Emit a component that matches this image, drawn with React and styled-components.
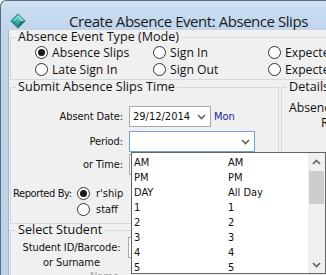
import React from 'react';
import styled, { createGlobalStyle, css } from 'styled-components';

const SEGOE = `"Open Sans", "Noto Sans", sans-serif`;
const TAHOMA = `"DejaVu Sans Condensed", "DejaVu Sans", sans-serif`;

const Global = createGlobalStyle`
  html, body { margin: 0; padding: 0; background: #ffffff; overflow: hidden; }
  body { width: 326px; height: 275px; }
  * { box-sizing: border-box; }
`;

const Window = styled.div`
  width: 345px;
  height: 300px;
  border-top: 1px solid #5d6b7b;
  border-left: 1px solid #5d6b7b;
  border-top-left-radius: 6px;
  background: linear-gradient(180deg, #cde0f3 0px, #c0d5ec 30px, #bcd2ea 100%);
  display: flex;
  flex-direction: column;
`;

const TitleBar = styled.div`
  height: 29px;
  flex: none;
  display: flex;
  align-items: center;
  padding: 10px 0 0 9px;
`;

const Title = styled.div`
  font-family: ${SEGOE};
  font-size: 15px;
  line-height: 18px;
  color: #1b1b1b;
  margin-left: 43px;
  white-space: nowrap;
  letter-spacing: -0.45px;
`;

const Client = styled.div`
  position: relative;
  flex: 1;
  margin-left: 7px;
  border-left: 1px solid #9fb3ca;
  background: #f0f0f0;
  overflow: hidden;
`;

const Group = styled.fieldset`
  margin: ${p => p.$mt || 0}px 0 0 ${p => p.$ml || 1}px;
  padding: 0 0 1px 0;
  border: 1px solid #d5d9dd;
  width: ${p => p.$w}px;
  height: ${p => (p.$h ? `${p.$h}px` : 'auto')};
  min-width: 0;
  flex: none;
`;

const Legend = styled.legend`
  margin-left: 5px;
  padding: 0 2px;
  font-family: ${SEGOE};
  font-size: 12.6px;
  line-height: 14px;
  color: #111;
`;

const RadioGrid = styled.div`
  display: grid;
  grid-template-columns: 118px 115px auto;
  grid-auto-rows: 17px;
  padding-left: 24px;
`;

const RadioItem = styled.label`
  display: flex;
  align-items: center;
  gap: ${p => p.$gap || 4}px;
  font-family: ${p => (p.$tahoma ? TAHOMA : SEGOE)};
  font-size: ${p => (p.$tahoma ? 11 : 12.2)}px;
  color: #111;
  white-space: nowrap;
`;

const RadioCircle = styled.span`
  position: relative;
  flex: none;
  width: 13px;
  height: 13px;
  border-radius: 50%;
  border: 1px solid #333;
  background: #fff;
  ${p =>
    p.$checked &&
    css`
      &::after {
        content: '';
        position: absolute;
        left: 2px;
        top: 2px;
        width: 7px;
        height: 7px;
        border-radius: 50%;
        background: #1a1a1a;
      }
    `}
`;

const Row = styled.div`
  display: flex;
  align-items: flex-start;
`;

const FieldRow = styled.div`
  display: grid;
  grid-template-columns: 113px auto;
  column-gap: ${p => p.$gap ?? 5}px;
  align-items: ${p => p.$align || 'center'};
  height: ${p => p.$h || 21}px;
  margin-top: ${p => p.$mt || 0}px;
`;

const Label = styled.div`
  font-family: ${TAHOMA};
  font-size: 11px;
  line-height: 15px;
  letter-spacing: ${p => p.$ls ?? -0.1}px;
  color: ${p => p.$color || '#111'};
  text-align: ${p => p.$align || 'right'};
  padding-left: ${p => p.$pl || 0}px;
  padding-right: ${p => p.$pr || 0}px;
  margin-top: ${p => p.$mt || 0}px;
  white-space: nowrap;
`;

const InputBox = styled.div`
  height: 21px;
  width: ${p => p.$w}px;
  border: 1px solid ${p => (p.$focus ? '#6ea3d9' : '#a9a9a9')};
  background: #fff;
  display: flex;
  align-items: center;
  padding: 0 4px 0 3px;
  font-family: ${TAHOMA};
  font-size: 11px;
  color: #111;
`;

const InputText = styled.span`
  flex: 1;
`;

const Inline = styled.div`
  display: flex;
  align-items: center;
  gap: 3px;
`;

const DayText = styled.span`
  font-family: ${TAHOMA};
  font-size: 11px;
  color: #1e1ea4;
`;

const ReportGrid = styled.div`
  display: grid;
  grid-template-columns: 66px auto;
  grid-auto-rows: 16px;
  margin-top: ${p => p.$mt || 0}px;
  align-items: center;
`;

const DetailText = styled.div`
  font-family: ${SEGOE};
  font-size: 12.2px;
  line-height: 14px;
  color: #111;
  padding-left: ${p => p.$pl || 0}px;
  margin-top: ${p => p.$mt || 0}px;
  white-space: nowrap;
`;

const DropList = styled.div`
  position: absolute;
  left: 122px;
  top: 122px;
  width: 195px;
  height: 122px;
  border: 1px solid #646464;
  background: #fff;
  display: flex;
  z-index: 5;
`;

const ListBody = styled.div`
  flex: 1;
  padding: 2px 0 0 2px;
`;

const ListRow = styled.div`
  display: grid;
  grid-template-columns: 94px auto;
  height: 15px;
  align-items: center;
  font-family: ${TAHOMA};
  font-size: 11px;
  color: #111;
`;

const ScrollBar = styled.div`
  width: 17px;
  flex: none;
  background: #f0f0f0;
  display: flex;
  flex-direction: column;
  align-items: stretch;
`;

const ScrollBtn = styled.div`
  height: 17px;
  display: flex;
  align-items: center;
  justify-content: center;
`;

const Thumb = styled.div`
  height: 33px;
  margin: 1px 1px 0 1px;
  background: #cdcdcd;
`;

const Spacer = styled.div`
  flex: 1;
`;

const Chevron = ({ up }) => (
  <svg width="9" height="6" viewBox="0 0 9 6">
    <polyline
      points={up ? '1,5 4.5,1.5 8,5' : '1,1 4.5,4.5 8,1'}
      fill="none"
      stroke="#606060"
      strokeWidth="1.6"
    />
  </svg>
);

const AppIcon = () => (
  <svg width="16" height="16" viewBox="0 0 16 16">
    <polygon points="8,0.5 15.5,8 8,15.5 0.5,8" fill="#1f6f6b" />
    <polygon points="8,1.8 14.2,8 8,8 1.8,8" fill="#69d5c9" />
    <polygon points="8,1.8 14.2,8 8,8" fill="#93e6dc" />
    <polygon points="1.8,8 8,8 8,14.2" fill="#2a9a90" />
    <polygon points="8,8 14.2,8 8,14.2" fill="#1c7b74" />
    <polygon points="8,4.5 11.5,8 8,11.5 4.5,8" fill="#3fb3a8" opacity="0.8" />
  </svg>
);

const Radio = ({ checked, children, gap, tahoma }) => (
  <RadioItem $gap={gap} $tahoma={tahoma}>
    <RadioCircle $checked={checked} />
    <span>{children}</span>
  </RadioItem>
);

const periods = [
  ['AM', 'AM'],
  ['PM', 'PM'],
  ['DAY', 'All Day'],
  ['1', '1'],
  ['2', '2'],
  ['3', '3'],
  ['4', '4'],
  ['5', '5'],
];

export default function App() {
  return (
    <>
      <Global />
      <Window>
        <TitleBar>
          <AppIcon />
          <Title>Create Absence Event: Absence Slips</Title>
        </TitleBar>
        <Client>
          <Group $w={345}>
            <Legend>Absence Event Type (Mode)</Legend>
            <RadioGrid>
              <Radio checked>Absence Slips</Radio>
              <Radio>Sign In</Radio>
              <Radio>Expected Absence</Radio>
              <Radio>Late Sign In</Radio>
              <Radio>Sign Out</Radio>
              <Radio>Expected Late</Radio>
            </RadioGrid>
          </Group>
          <Row>
            <Group $w={269} $h={144}>
              <Legend>Submit Absence Slips Time</Legend>
              <FieldRow $mt={12}>
                <Label $pr={1}>Absent Date:</Label>
                <Inline>
                  <InputBox $w={82}>
                    <InputText>29/12/2014</InputText>
                    <Chevron />
                  </InputBox>
                  <DayText>Mon</DayText>
                </Inline>
              </FieldRow>
              <FieldRow $mt={4}>
                <Label $pr={1}>Period:</Label>
                <InputBox $w={126} $focus>
                  <InputText />
                  <Chevron />
                </InputBox>
              </FieldRow>
              <FieldRow $mt={2}>
                <Label $pr={1}>or Time:</Label>
                <InputBox $w={80} />
              </FieldRow>
              <ReportGrid $mt={10}>
                <Label $align="left" $pl={2} $ls={-0.4}>Reported By:</Label>
                <Radio checked gap={6} tahoma>r'ship</Radio>
                <span />
                <Radio gap={6} tahoma>staff</Radio>
              </ReportGrid>
            </Group>
            <Group $w={60} $h={144} $ml={2}>
              <Legend>Details</Legend>
              <DetailText $mt={7} $pl={7}>Absence</DetailText>
              <DetailText $mt={1} $pl={39}>R</DetailText>
            </Group>
          </Row>
          <Group $w={300} $h={70} $mt={-1}>
            <Legend>Select Student</Legend>
            <FieldRow $h={29} $gap={4} $align="start">
              <Label $align="center" $pl={8} $mt={3}>
                Student ID/Barcode:
                <br />
                or Surname
              </Label>
              <InputBox $w={120} />
            </FieldRow>
            <FieldRow>
              <Label $pr={2} $color="#a0a0a0">Name:</Label>
              <span />
            </FieldRow>
          </Group>
          <DropList>
            <ListBody>
              {periods.map(([code, name]) => (
                <ListRow key={code}>
                  <span>{code}</span>
                  <span>{name}</span>
                </ListRow>
              ))}
            </ListBody>
            <ScrollBar>
              <ScrollBtn>
                <Chevron up />
              </ScrollBtn>
              <Thumb />
              <Spacer />
              <ScrollBtn>
                <Chevron />
              </ScrollBtn>
            </ScrollBar>
          </DropList>
        </Client>
      </Window>
    </>
  );
}
